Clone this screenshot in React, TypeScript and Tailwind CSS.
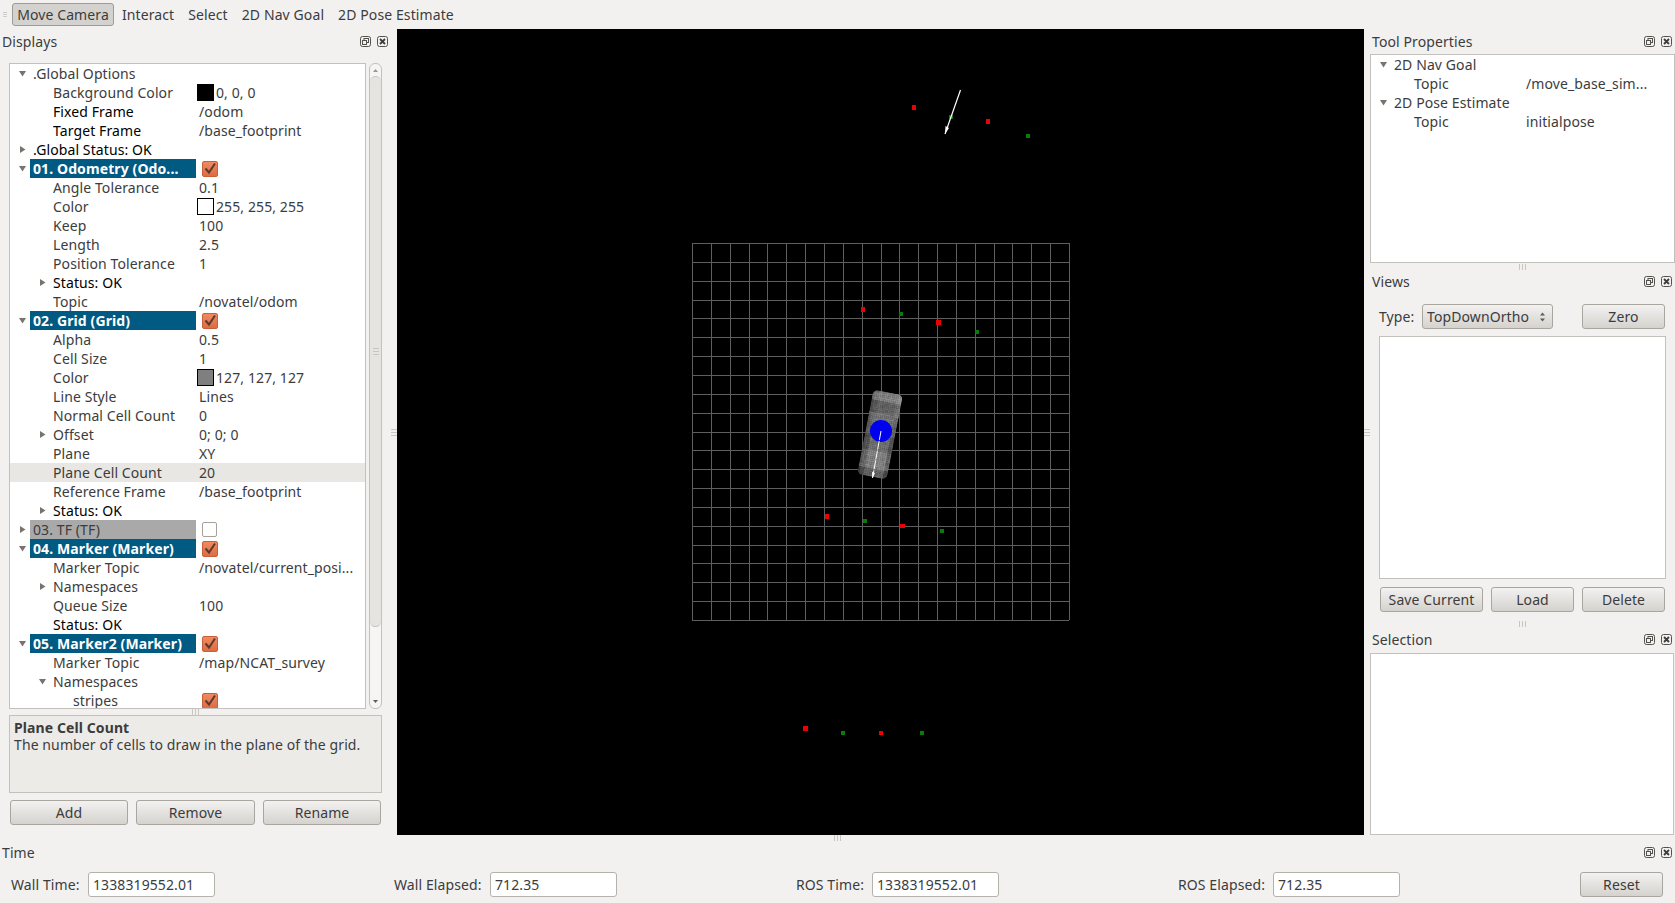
import React from 'react';

type Row = {
  name: string;
  value?: string;
  level: 0 | 1 | 2;
  arrow?: 'open' | 'closed';
  strong?: boolean;
  head?: boolean;
  off?: boolean;
  check?: boolean;
  swatch?: string;
  selected?: boolean;
};

const displayRows: Row[] = [
  { name: '.Global Options', level: 0, arrow: 'open' },
  { name: 'Background Color', value: '0, 0, 0', level: 1, swatch: 'bg-black' },
  { name: 'Fixed Frame', value: '/odom', level: 1, strong: true },
  { name: 'Target Frame', value: '/base_footprint', level: 1, strong: true },
  { name: '.Global Status: OK', level: 0, arrow: 'closed', strong: true },
  { name: '01. Odometry (Odo...', level: 0, arrow: 'open', head: true, check: true },
  { name: 'Angle Tolerance', value: '0.1', level: 1 },
  { name: 'Color', value: '255, 255, 255', level: 1, swatch: 'bg-white' },
  { name: 'Keep', value: '100', level: 1 },
  { name: 'Length', value: '2.5', level: 1 },
  { name: 'Position Tolerance', value: '1', level: 1 },
  { name: 'Status: OK', level: 1, arrow: 'closed', strong: true },
  { name: 'Topic', value: '/novatel/odom', level: 1 },
  { name: '02. Grid (Grid)', level: 0, arrow: 'open', head: true, check: true },
  { name: 'Alpha', value: '0.5', level: 1 },
  { name: 'Cell Size', value: '1', level: 1 },
  { name: 'Color', value: '127, 127, 127', level: 1, swatch: 'bg-[#7f7f7f]' },
  { name: 'Line Style', value: 'Lines', level: 1 },
  { name: 'Normal Cell Count', value: '0', level: 1 },
  { name: 'Offset', value: '0; 0; 0', level: 1, arrow: 'closed' },
  { name: 'Plane', value: 'XY', level: 1 },
  { name: 'Plane Cell Count', value: '20', level: 1, selected: true },
  { name: 'Reference Frame', value: '/base_footprint', level: 1 },
  { name: 'Status: OK', level: 1, arrow: 'closed', strong: true },
  { name: '03. TF (TF)', level: 0, arrow: 'closed', off: true, check: false },
  { name: '04. Marker (Marker)', level: 0, arrow: 'open', head: true, check: true },
  { name: 'Marker Topic', value: '/novatel/current_posi...', level: 1 },
  { name: 'Namespaces', level: 1, arrow: 'closed' },
  { name: 'Queue Size', value: '100', level: 1 },
  { name: 'Status: OK', level: 1, strong: true },
  { name: '05. Marker2 (Marker)', level: 0, arrow: 'open', head: true, check: true },
  { name: 'Marker Topic', value: '/map/NCAT_survey', level: 1 },
  { name: 'Namespaces', level: 1, arrow: 'open' },
  { name: 'stripes', level: 2, check: true },
];

// x, y, w, h
const redDots = [
  [912, 105, 4, 5], [986, 119, 4, 5], [861, 307, 4, 5], [936, 320, 5, 5],
  [825, 514, 4, 5], [900, 524, 5, 4], [803, 726, 5, 5], [879, 731, 4, 4],
];
const greenDots = [
  [949, 115, 4, 4], [1026, 134, 4, 4], [899, 312, 4, 4], [975, 330, 4, 4],
  [863, 519, 4, 4], [940, 529, 4, 4], [841, 731, 4, 4], [920, 731, 4, 4],
];

const Arrow = ({ dir }: { dir: 'open' | 'closed' }) => (
  <svg width="9" height="9" viewBox="0 0 9 9" className="shrink-0">
    {dir === 'open' ? (
      <path d="M1 2h7L4.5 7.5z" fill="#77736d" />
    ) : (
      <path d="M2 1v7l5.5-3.5z" fill="#77736d" />
    )}
  </svg>
);

const Check = ({ on }: { on: boolean }) =>
  on ? (
    <div className="w-[16px] h-[16px] rounded-[2px] border border-[#c85f38] bg-linear-to-b from-[#f08a60] to-[#dc6c44] flex items-center justify-center">
      <svg width="14" height="14" viewBox="0 0 14 14">
        <path d="M2.5 6.5l3.5 4L12 1.5" fill="none" stroke="#5a3a2c" strokeWidth="2" />
      </svg>
    </div>
  ) : (
    <div className="w-[15px] h-[15px] rounded-[2px] border border-[#a5a19b] bg-white" />
  );

const DockIcons = () => (
  <div className="flex gap-[6px] items-center">
    <svg width="11" height="11" viewBox="0 0 11 11">
      <rect x="0.5" y="0.5" width="10" height="10" rx="2" fill="#f2f1f0" stroke="#55524e" />
      <rect x="4" y="2.5" width="4.5" height="4" fill="none" stroke="#55524e" />
      <rect x="2.5" y="4.5" width="4" height="4" fill="#f2f1f0" stroke="#55524e" />
    </svg>
    <svg width="11" height="11" viewBox="0 0 11 11">
      <rect x="0.5" y="0.5" width="10" height="10" rx="2" fill="#f2f1f0" stroke="#55524e" />
      <path d="M3 3l5 5M8 3l-5 5" stroke="#3c3c3c" strokeWidth="1.8" />
    </svg>
  </div>
);

const Grip = () => (
  <div className="flex gap-[2px]">
    <div className="w-px h-[6px] bg-[#c9c6c1]" />
    <div className="w-px h-[6px] bg-[#c9c6c1]" />
    <div className="w-px h-[6px] bg-[#c9c6c1]" />
  </div>
);

const GripV = () => (
  <div className="flex flex-col gap-[2px]">
    <div className="h-px w-[6px] bg-[#c9c6c1]" />
    <div className="h-px w-[6px] bg-[#c9c6c1]" />
    <div className="h-px w-[6px] bg-[#c9c6c1]" />
  </div>
);

const Button = ({ label, className }: { label: string; className: string }) => (
  <button className={`h-[25px] rounded-[3px] border border-[#a9a59f] bg-linear-to-b from-[#f3f2f1] to-[#d5d2ce] text-[#3c3c3c] flex items-center justify-center ${className}`}>
    {label}
  </button>
);

const TimeField = ({ label, value, className, labelClass }: { label: string; value: string; className: string; labelClass: string }) => (
  <div className={`flex items-center ${className}`}>
    <span className={`text-[#3c3c3c] ${labelClass}`}>{label}</span>
    <div className="w-[127px] h-[25px] bg-white border border-[#b5b1ab] rounded-[3px] px-[4px] flex items-center text-[#3c3c3c]">
      {value}
    </div>
  </div>
);

const TreeRow = ({ row }: { row: Row }) => {
  const arrowCol =
    row.level === 0 ? 'pl-[8px] w-[20px]' : row.level === 1 ? 'pl-[28px] w-[43px]' : 'pl-[28px] w-[63px]';
  const nameColor = row.head
    ? 'bg-[#005a82] text-white font-bold pl-[3px] w-[166px]'
    : row.off
      ? 'bg-[#a9a9a9] text-[#3c3c3c] pl-[3px] w-[166px]'
      : row.level === 0
        ? `pl-[3px] w-[166px] ${row.strong ? 'text-black' : 'text-[#3c3c3c]'}`
        : row.level === 1
          ? `w-[143px] ${row.strong ? 'text-black' : 'text-[#3c3c3c]'}`
          : 'w-[123px] text-[#3c3c3c]';

  return (
    <div className={`flex items-center h-[19px] ${row.selected ? 'bg-[#e9e7e4]' : ''}`}>
      <div className={`flex items-center shrink-0 ${arrowCol}`}>{row.arrow && <Arrow dir={row.arrow} />}</div>
      <div className={`h-[19px] flex items-center shrink-0 whitespace-nowrap overflow-hidden ${nameColor}`}>{row.name}</div>
      <div className="flex items-center pl-[2px] text-[#3c3c3c] whitespace-nowrap">
        {row.check !== undefined && (
          <div className="ml-[4px]">
            <Check on={row.check} />
          </div>
        )}
        {row.swatch && <div className={`w-[17px] h-[17px] border border-black -ml-px mr-[2px] ${row.swatch}`} />}
        {row.value && <span className={row.swatch ? '' : 'ml-px'}>{row.value}</span>}
      </div>
    </div>
  );
};

const Scrollbar = () => (
  <div className="w-[13px] h-[646px] ml-[3px] border border-[#c4c1bc] rounded-[6px] bg-[#f6f5f4] flex flex-col items-center overflow-hidden">
    <svg width="7" height="12" viewBox="0 0 7 12" className="shrink-0">
      <path d="M1 8h5L3.5 5z" fill="#9a9690" />
    </svg>
    <div className="w-full h-[551px] rounded-[6px] border-y border-[#c4c1bc] bg-[#e6e4e1] flex items-center justify-center shrink-0">
      <GripV />
    </div>
    <div className="flex-1" />
    <svg width="7" height="12" viewBox="0 0 7 12" className="shrink-0">
      <path d="M1 4h5L3.5 7z" fill="#5f5c57" />
    </svg>
  </div>
);

// pixel noise for the point-cloud look of the car model
const carCells = () => {
  const cells: { x: number; y: number; v: number }[] = [];
  for (let y = -43; y < 43; y += 2) {
    for (let x = -15; x < 15; x += 2) {
      const n = Math.sin(x * 12.9898 + y * 78.233) * 43758.5453;
      const noise = (n - Math.floor(n) - 0.5) * 18;
      let v = 116;
      if (y < -33) v = 136;
      else if (y < -22) v = 104;
      else if (y < -12) v = 124;
      else if (y > 16 && y < 34) v = 136;
      else if (y >= 34) v = 104;
      if (Math.abs(x) > 10) v -= y < 0 ? 12 : 30;
      if (x > 10 && y < -20) v += 30;
      if (Math.abs(x) > 13 || Math.abs(y) > 41) v -= 14;
      cells.push({ x, y, v: Math.round(v + noise) });
    }
  }
  return cells;
};

const Scene = () => {
  const lines: number[] = [];
  for (let i = 0; i <= 20; i++) lines.push(Math.round(18.85 * i));
  return (
    <svg width="967" height="806" viewBox="397 29 967 806" className="block">
      <defs>
        <clipPath id="car">
          <rect x="-15" y="-43" width="30" height="86" rx="5" />
        </clipPath>
      </defs>
      <g stroke="#5e5e5e" strokeWidth="1" shapeRendering="crispEdges">
        {lines.map((d) => (
          <line key={`v${d}`} x1={692.5 + d} y1={243} x2={692.5 + d} y2={620} />
        ))}
        {lines.map((d) => (
          <line key={`h${d}`} x1={692} y1={243.5 + d} x2={1069} y2={243.5 + d} />
        ))}
      </g>
      {redDots.map(([x, y, w, h]) => (
        <rect key={`r${x}${y}`} x={x} y={y} width={w} height={h} fill="#ee0000" />
      ))}
      {greenDots.map(([x, y, w, h]) => (
        <rect key={`g${x}${y}`} x={x} y={y} width={w} height={h} fill="#0a7a0a" />
      ))}
      <path d="M960.5 90L945 134" stroke="#fff" strokeWidth="1.2" />
      <path d="M945.5 126l3.5 2-4 6z" fill="#fff" />
      <g transform="translate(880 434.5) rotate(11)" clipPath="url(#car)">
        {carCells().map((c) => (
          <rect
            key={`${c.x}:${c.y}`}
            x={c.x}
            y={c.y}
            width="2.2"
            height="2.2"
            style={{ fill: `rgb(${c.v},${c.v},${c.v})` }}
          />
        ))}
      </g>
      <circle cx="881" cy="431" r="11" fill="#0000f0" />
      <path d="M881 431L872.5 478" stroke="#fff" strokeWidth="1" strokeDasharray="9 1" />
      <path d="M872 472l3 1-2.5 5z" fill="#fff" />
    </svg>
  );
};

export default function App() {
  return (
    <div className="w-[1675px] h-[903px] overflow-hidden bg-[#f2f1f0] text-[14px] leading-[19px] tracking-[0.1px] text-[#3c3c3c] font-['Noto_Sans',sans-serif]">
      {/* toolbar */}
      <div className="h-[29px] flex items-center pl-[3px]">
        <div className="flex flex-col gap-[1px] w-[9px] items-start">
          <div className="w-[4px] h-px bg-[#cfccc8]" />
          <div className="w-[4px] h-px bg-[#cfccc8]" />
          <div className="w-[4px] h-px bg-[#cfccc8]" />
        </div>
        <div className="w-[102px] h-[23px] rounded-[3px] border border-[#9f9b95] bg-[#d4d2ce] flex items-center justify-center">Move Camera</div>
        <div className="flex gap-[14px] ml-[8px]">
          <span>Interact</span>
          <span>Select</span>
          <span>2D Nav Goal</span>
          <span>2D Pose Estimate</span>
        </div>
      </div>

      <div className="flex h-[806px]">
        {/* displays dock */}
        <div className="w-[391px] shrink-0 flex flex-col">
          <div className="h-[34px] pl-[2px] pr-[3px] pb-[10px] flex items-center justify-between">
            <span>Displays</span>
            <DockIcons />
          </div>
          <div className="flex pl-[9px]">
            <div className="w-[357px] h-[646px] bg-white border border-[#c4c1bc] overflow-hidden">
              {displayRows.map((row, i) => (
                <TreeRow key={i} row={row} />
              ))}
            </div>
            <Scrollbar />
          </div>
          <div className="h-[6px] flex items-center justify-center">
            <Grip />
          </div>
          <div className="ml-[9px] w-[373px] h-[78px] bg-[#edebe7] border border-[#c4c1bc] px-[4px] pt-[3px] leading-[17px]">
            <div className="font-bold">Plane Cell Count</div>
            <div>The number of cells to draw in the plane of the grid.</div>
          </div>
          <div className="flex mt-[7px] pl-[10px] gap-[8px]">
            <Button label="Add" className="w-[118px]" />
            <Button label="Remove" className="w-[119px]" />
            <Button label="Rename" className="w-[118px]" />
          </div>
        </div>

        <div className="w-[6px] shrink-0 flex items-center justify-center">
          <GripV />
        </div>

        {/* 3d view */}
        <div className="w-[967px] shrink-0 bg-black">
          <Scene />
        </div>

        <div className="w-[6px] shrink-0 flex items-center justify-center">
          <GripV />
        </div>

        {/* right docks */}
        <div className="w-[305px] shrink-0 flex flex-col">
          <div className="h-[25px] pl-[2px] pr-[3px] flex items-center justify-between">
            <span>Tool Properties</span>
            <DockIcons />
          </div>
          <div className="h-[209px] bg-white border border-[#c4c1bc]">
            <div className="flex items-center h-[19px]">
              <div className="pl-[8px] w-[23px]"><Arrow dir="open" /></div>
              <span>2D Nav Goal</span>
            </div>
            <div className="flex items-center h-[19px] pl-[43px]">
              <span className="w-[112px]">Topic</span>
              <span>/move_base_sim...</span>
            </div>
            <div className="flex items-center h-[19px]">
              <div className="pl-[8px] w-[23px]"><Arrow dir="open" /></div>
              <span>2D Pose Estimate</span>
            </div>
            <div className="flex items-center h-[19px] pl-[43px]">
              <span className="w-[112px]">Topic</span>
              <span>initialpose</span>
            </div>
          </div>
          <div className="h-[7px] flex items-center justify-center">
            <Grip />
          </div>
          <div className="h-[25px] pl-[2px] pr-[3px] pb-[3px] flex items-center justify-between">
            <span>Views</span>
            <DockIcons />
          </div>
          <div className="flex items-center h-[25px] mt-[9px] pl-[9px]">
            <span className="w-[43px]">Type:</span>
            <div className="w-[131px] h-[25px] rounded-[3px] border border-[#a9a59f] bg-linear-to-b from-[#f3f2f1] to-[#d5d2ce] flex items-center justify-between pl-[4px] pr-[6px]">
              <span>TopDownOrtho</span>
              <svg width="7" height="14" viewBox="0 0 7 14">
                <path d="M1 5.5h5L3.5 2.5zM1 8.5h5l-2.5 3z" fill="#5f5c57" />
              </svg>
            </div>
            <Button label="Zero" className="w-[83px] ml-[29px]" />
          </div>
          <div className="ml-[9px] mt-[7px] w-[287px] h-[243px] bg-white border border-[#c4c1bc]" />
          <div className="flex mt-[8px] ml-[10px] gap-[8px]">
            <Button label="Save Current" className="w-[103px]" />
            <Button label="Load" className="w-[83px]" />
            <Button label="Delete" className="w-[83px]" />
          </div>
          <div className="h-[17px] mt-[3px] flex items-center justify-center">
            <Grip />
          </div>
          <div className="h-[25px] -mt-[4px] pl-[2px] pr-[3px] pb-[2px] flex items-center justify-between">
            <span>Selection</span>
            <DockIcons />
          </div>
          <div className="flex-1 bg-white border border-[#c4c1bc] mr-px" />
        </div>
      </div>

      {/* time panel */}
      <div className="h-[68px] flex flex-col">
        <div className="h-[6px] flex items-center justify-center">
          <Grip />
        </div>
        <div className="h-[23px] pl-[2px] pr-[3px] flex items-center justify-between">
          <span>Time</span>
          <DockIcons />
        </div>
        <div className="flex items-center mt-[8px] pl-[11px]">
          <TimeField label="Wall Time:" value="1338319552.01" className="w-[383px]" labelClass="w-[77px]" />
          <TimeField label="Wall Elapsed:" value="712.35" className="w-[402px]" labelClass="w-[96px]" />
          <TimeField label="ROS Time:" value="1338319552.01" className="w-[382px]" labelClass="w-[76px]" />
          <TimeField label="ROS Elapsed:" value="712.35" className="w-[402px]" labelClass="w-[95px]" />
          <Button label="Reset" className="w-[83px]" />
        </div>
      </div>
    </div>
  );
}
